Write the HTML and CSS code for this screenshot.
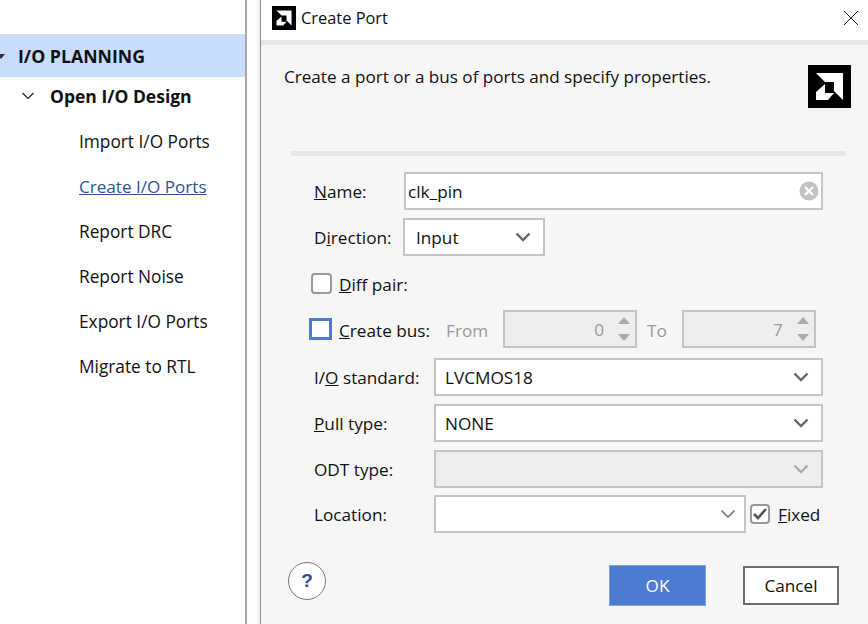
FILE: index.html
```html
<!DOCTYPE html>
<html>
<head>
	<meta http-equiv="Content-Type" content="text/html; charset=utf-8">
	<title>Create Port</title>
	<link rel="stylesheet" href="styles.css">
</head>
<body>
	<div class="app">
		<nav class="nav">
			<div class="nav-section"><span class="nav-caret"></span>I/O PLANNING</div>
			<div class="nav-group">
				<svg class="nav-chevron" width="14" height="8" viewBox="0 0 14 8"><path d="M1.5 1 L7 6.5 L12.5 1" fill="none" stroke="#222" stroke-width="1.2"/></svg>
				Open I/O Design
			</div>
			<a class="nav-item">Import I/O Ports</a>
			<a class="nav-item nav-link">Create I/O Ports</a>
			<a class="nav-item">Report DRC</a>
			<a class="nav-item">Report Noise</a>
			<a class="nav-item">Export I/O Ports</a>
			<a class="nav-item">Migrate to RTL</a>
		</nav>

		<div class="gutter"></div>

		<div class="dialog">
			<div class="titlebar">
				<svg class="logo-small" viewBox="0 0 43 43"><rect width="43" height="43" fill="#000"/><path d="M8 8H35V35L26 26V17H17Z M17 19L8 27V35H20L26 28H17Z" fill="#fff"/></svg>
				<span class="title">Create Port</span>
				<svg class="close" width="16" height="16" viewBox="0 0 16 16"><path d="M1 1L15 15M15 1L1 15" stroke="#222" stroke-width="1"/></svg>
			</div>

			<div class="banner">
				<span>Create a port or a bus of ports and specify properties.</span>
				<svg class="logo" viewBox="0 0 43 43"><rect width="43" height="43" fill="#000"/><path d="M8 8H35V35L26 26V17H17Z M17 19L8 27V35H20L26 28H17Z" fill="#fff"/></svg>
			</div>

			<div class="separator"></div>

			<form class="form">
				<div class="row">
					<label class="label label-name"><u>N</u>ame:</label>
					<div class="field field-grow field-name">
						<span>clk_pin</span>
						<svg class="clear" width="20" height="20" viewBox="0 0 20 20"><circle cx="10" cy="10" r="9.5" fill="#c2c2c2"/><path d="M6 6L14 14M14 6L6 14" stroke="#fff" stroke-width="2.4"/></svg>
					</div>
				</div>

				<div class="row row-direction">
					<label class="label label-name">D<u>i</u>rection:</label>
					<div class="field field-direction">
						<span>Input</span>
						<svg class="arrow" width="16" height="10" viewBox="0 0 16 10"><path d="M1.5 1.5L8 8L14.5 1.5" fill="none" stroke="#666" stroke-width="2.4"/></svg>
					</div>
				</div>

				<div class="row row-check">
					<span class="check"></span>
					<label class="check-label"><u>D</u>iff pair:</label>
				</div>

				<div class="row row-bus">
					<span class="check check-focus"></span>
					<label class="check-label"><u>C</u>reate bus:</label>
					<span class="muted muted-from">From</span>
					<div class="field field-spin field-off">
						<span class="spin-value">0</span>
						<span class="spin-arrows"><i class="up"></i><i class="down"></i></span>
					</div>
					<span class="muted muted-to">To</span>
					<div class="field field-spin field-off">
						<span class="spin-value">7</span>
						<span class="spin-arrows"><i class="up"></i><i class="down"></i></span>
					</div>
				</div>

				<div class="row row-select">
					<label class="label">I/<u>O</u> standard:</label>
					<div class="field field-grow">
						<span>LVCMOS18</span>
						<svg class="arrow" width="16" height="10" viewBox="0 0 16 10"><path d="M1.5 1.5L8 8L14.5 1.5" fill="none" stroke="#666" stroke-width="2.4"/></svg>
					</div>
				</div>

				<div class="row row-select">
					<label class="label"><u>P</u>ull type:</label>
					<div class="field field-grow">
						<span>NONE</span>
						<svg class="arrow" width="16" height="10" viewBox="0 0 16 10"><path d="M1.5 1.5L8 8L14.5 1.5" fill="none" stroke="#666" stroke-width="2.4"/></svg>
					</div>
				</div>

				<div class="row row-select">
					<label class="label">ODT type:</label>
					<div class="field field-grow field-off">
						<span></span>
						<svg class="arrow" width="16" height="10" viewBox="0 0 16 10"><path d="M1.5 1.5L8 8L14.5 1.5" fill="none" stroke="#aaa" stroke-width="2.4"/></svg>
					</div>
				</div>

				<div class="row row-location">
					<label class="label">Location:</label>
					<div class="field field-location">
						<span></span>
						<svg class="arrow arrow-thin" width="16" height="10" viewBox="0 0 16 10"><path d="M1.5 1.5L8 8L14.5 1.5" fill="none" stroke="#777" stroke-width="1.6"/></svg>
					</div>
					<span class="check check-on">
						<svg width="16" height="14" viewBox="0 0 16 14"><path d="M2 7L6 11L14 2" fill="none" stroke="#555" stroke-width="2.6"/></svg>
					</span>
					<label class="fixed-label"><u>F</u>ixed</label>
				</div>
			</form>

			<div class="footer">
				<button type="button" class="help">?</button>
				<button type="button" class="btn btn-ok">OK</button>
				<button type="button" class="btn btn-cancel">Cancel</button>
			</div>
		</div>
	</div>
</body>
</html>
```

FILE: styles.css
```css
* {padding: 0; margin: 0; box-sizing: border-box;}
html, body {height: 100%; overflow: hidden;}
body {background: #fff; color: #111; font-family: "Open Sans", "Noto Sans", "Liberation Sans", sans-serif; font-size: 17.2px;}

.app {display: flex; height: 624px;}

/* left flow navigator */
.nav {width: 247px; flex: none; padding-top: 34px; border-right: 2px solid #a6a6a6; background: #fff;}
.nav-section {display: flex; align-items: center; height: 43px; padding-left: 18px; background: #c9dcfb; font-weight: 700; font-size: 17.7px; position: relative;}
.nav-caret {position: absolute; left: -3px; top: 20px; border: 4px solid transparent; border-top: 5px solid #333;}
.nav-group {display: flex; align-items: center; height: 38px; margin-bottom: 4px; padding-left: 21px; font-weight: 700; font-size: 17.5px;}
.nav-chevron {margin-right: 15px;}
.nav-item {display: flex; align-items: center; height: 45px; padding-left: 79px; font-size: 17.3px;}
.nav-link {color: #2f5597; text-decoration: underline; font-size: 17.1px;}

.gutter {width: 13px; flex: none; background: linear-gradient(to right, #fff 0, #fff 60%, #eee 100%);}

/* dialog */
.dialog {flex: 1; min-width: 0; display: flex; flex-direction: column; background: #f6f6f6; border-left: 1px solid #8c8c8c;}
.titlebar {display: flex; align-items: center; height: 45px; padding: 0 9px 5px 11px; background: #fff; border-bottom: 5px solid #e6e6e6;}
.logo-small {width: 24px; height: 24px; margin-right: 5px;}
.title {flex: 1; font-size: 16.4px;}
.close {display: block;}

.banner {display: flex; justify-content: space-between; padding: 20px 17px 0 23px; font-size: 17.1px;}
.logo {width: 43px; height: 43px; display: block;}

.separator {height: 5px; margin: 43px 22px 0 30px; background: #e6e6e6;}

.form {padding: 16px 45px 0 49px;}
.row {display: flex; align-items: center;}
.row-direction {margin-top: 8px;}
.row-check {height: 21px; margin-top: 17px;}
.row-bus {position: relative; left: -1px; margin-top: 16px;}
.row-select {margin-top: 8px;}
.row-bus + .row-select {margin-top: 10px;}
.row-location {margin-top: 7px;}

.label {width: 124px; flex: none; padding-left: 4px;}
.label-name {width: 94px;}
.field {display: flex; align-items: center; justify-content: space-between; height: 38px; padding: 0 14px 0 9px; background: #fff; border: 2px solid #c4c4c4;}
.field-grow {flex: 1;}
.field-name {padding-left: 2px;}
.field-direction {width: 142px; margin-left: -1px; padding-left: 11px;}
.field-location {width: 312px;}
.field-off {background: #eee; color: #999;}
.field-spin {width: 134px; padding: 0 5px 0 0;}
.spin-value {flex: 1; text-align: right; margin-right: 14px;}
.spin-arrows {display: flex; flex-direction: column; gap: 10px;}
.spin-arrows i {display: block; border: 6.5px solid transparent; border-top: 0; border-bottom: 7px solid #aaa;}
.spin-arrows .down {border-bottom: 0; border-top: 7px solid #aaa;}
.clear {margin-right: -12px;}
.arrow {margin-right: -2px;}
.arrow-thin {margin-right: -6px;}

.check {display: block; flex: none; width: 21px; height: 21px; margin-left: 1px; background: #fff; border: 2px solid #999; border-radius: 4px;}
.check-focus {width: 23px; height: 22px; margin-left: 0; border: 3px solid #4d7bd0; border-radius: 0;}
.check-on {display: flex; align-items: center; justify-content: center; width: 20px; height: 20px; margin-left: 4px;}
.check-label {margin-left: 7px; padding-top: 2px;}
.fixed-label {margin-left: 8px; white-space: nowrap;}
.muted {color: #999; padding-top: 2px;}
.muted-from {margin-left: 16px; width: 57px;}
.muted-to {margin: 0 15px 0 10px;}

.footer {display: flex; align-items: flex-start; margin-top: 29px; padding: 0 29px 0 27px;}
.help {width: 38px; height: 38px; border: 1px solid #777; border-radius: 50%; background: #fff; color: #2f4f8f; font: 700 19px "Liberation Sans", sans-serif;}
.btn {width: 97px; padding-bottom: 0; font: inherit;}
.btn-ok {height: 41px; margin: 3px 0 0 auto; background: #4d7bd0; color: #fff; border: 1px solid #7ea0e0;}
.btn-cancel {height: 39px; margin: 4px 0 0 37px; width: 96px; background: #fff; color: #111; border: 2px solid #6e6e6e;}
```
